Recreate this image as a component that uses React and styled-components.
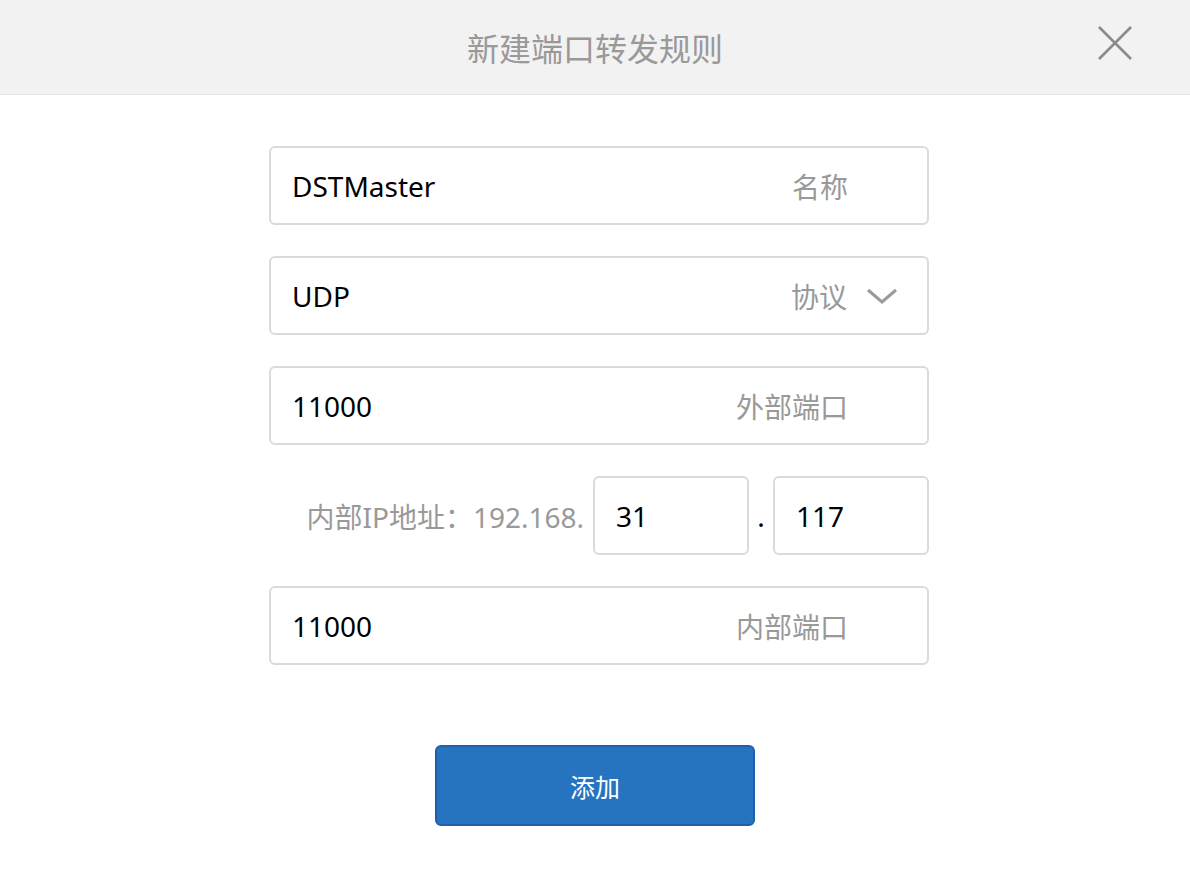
import React from "react";
import styled, { createGlobalStyle } from "styled-components";

const Global = createGlobalStyle`
  html, body { margin: 0; padding: 0; background: #fff; }
  body { font-family: "Noto Sans", "Noto Sans CJK SC", sans-serif; }
`;

const Page = styled.div`
  width: 1190px;
  height: 880px;
  background: #fff;
  display: flex;
  flex-direction: column;
`;

const Header = styled.header`
  height: 94px;
  background: #f2f2f2;
  border-bottom: 1px solid #e3e3e3;
  position: relative;
  display: flex;
  align-items: center;
  justify-content: center;
`;

const Title = styled.h1`
  margin: 0;
  font-family: "Noto Sans CJK SC", sans-serif;
  font-size: 32px;
  font-weight: 400;
  color: #999;
`;

const Close = styled.button`
  position: absolute;
  right: 57px;
  top: 25px;
  width: 36px;
  height: 36px;
  border: 0;
  background: transparent;
  padding: 0;
  cursor: pointer;
  display: flex;
  align-items: center;
  justify-content: center;
`;

const Form = styled.div`
  display: flex;
  flex-direction: column;
  align-items: center;
  padding-top: 51px;
`;

const Fields = styled.div`
  display: flex;
  flex-direction: column;
  gap: 31px;
  padding-left: 8px;
`;

const Field = styled.div`
  box-sizing: border-box;
  width: ${(p) => p.$w || 660}px;
  height: 79px;
  border: 2px solid #dadada;
  border-radius: 6px;
  display: flex;
  align-items: center;
  padding: 0 ${(p) => (p.$select ? 28 : 79)}px 0 21px;
`;

const Value = styled.span`
  flex: 1;
  font-size: 28px;
  color: #000;
`;

const Hint = styled.span`
  font-family: "Noto Sans CJK SC", sans-serif;
  font-size: 28px;
  color: #999;
`;

const Chevron = styled.svg`
  margin-left: 18px;
  width: 34px;
  height: 20px;
`;

const IpRow = styled.div`
  width: 660px;
  display: flex;
  align-items: center;
  justify-content: flex-end;
`;

const IpLabel = styled.span`
  font-size: 28px;
  color: #999;
  margin-right: 9px;
`;

const Dot = styled.span`
  width: 24px;
  text-align: center;
  font-size: 28px;
  color: #000;
`;

const Submit = styled.button`
  margin-top: 80px;
  width: 320px;
  height: 81px;
  background: #2674c0;
  border: 2px solid #1c61a9;
  border-radius: 6px;
  color: #fff;
  font-family: "Noto Sans CJK SC", sans-serif;
  font-size: 25px;
  cursor: pointer;
`;

export default function App() {
  return (
    <Page>
      <Global />
      <Header>
        <Title>新建端口转发规则</Title>
        <Close aria-label="close">
          <svg width="36" height="36" viewBox="0 0 36 36">
            <path d="M2 2 L34 34 M34 2 L2 34" stroke="#8a8a8a" strokeWidth="2.6" fill="none" />
          </svg>
        </Close>
      </Header>
      <Form>
        <Fields>
          <Field>
            <Value>DSTMaster</Value>
            <Hint>名称</Hint>
          </Field>
          <Field $select>
            <Value>UDP</Value>
            <Hint>协议</Hint>
            <Chevron viewBox="0 0 34 20">
              <path d="M3 4 L17 16 L31 4" stroke="#9a9a9a" strokeWidth="3" fill="none" />
            </Chevron>
          </Field>
          <Field>
            <Value>11000</Value>
            <Hint>外部端口</Hint>
          </Field>
          <IpRow>
            <IpLabel>内部IP地址：192.168.</IpLabel>
            <Field $w={156} $select>
              <Value>31</Value>
            </Field>
            <Dot>.</Dot>
            <Field $w={156} $select>
              <Value>117</Value>
            </Field>
          </IpRow>
          <Field>
            <Value>11000</Value>
            <Hint>内部端口</Hint>
          </Field>
        </Fields>
        <Submit>添加</Submit>
      </Form>
    </Page>
  );
}
